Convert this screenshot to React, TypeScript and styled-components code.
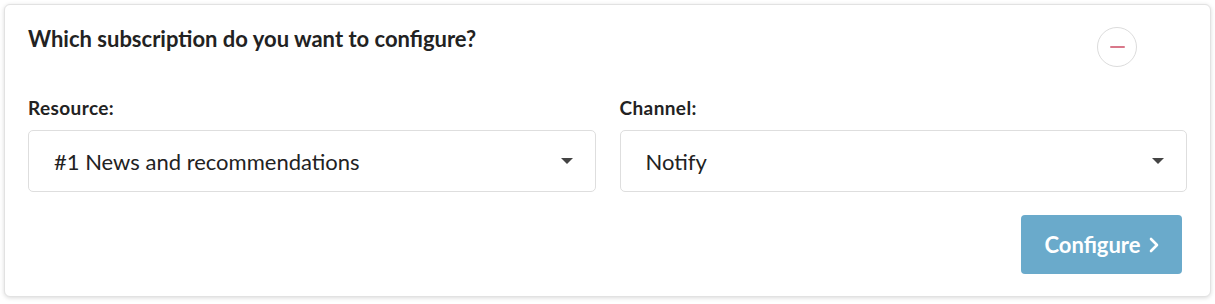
import React from 'react';
import styled, { createGlobalStyle } from 'styled-components';

const GlobalStyle = createGlobalStyle`
  body {
    margin: 0;
    background: #ffffff;
    font-family: Lato, 'Noto Sans', sans-serif;
    color: #222;
  }
`;

const Page = styled.div`
  padding: 4px 4px 6px 4px;
`;

const Card = styled.section`
  border: 1px solid #e2e2e2;
  border-radius: 6px;
  box-shadow: 0 1px 4px rgba(0, 0, 0, 0.15);
  padding: 21px 23px 22px 23px;
  background: #fff;
`;

const Header = styled.div`
  display: flex;
  justify-content: space-between;
  align-items: flex-start;
  height: 71px;
`;

const Title = styled.h2`
  margin: 0;
  font-size: 22px;
  line-height: 26px;
  font-weight: 700;
  color: #222;
`;

const RemoveButton = styled.button`
  width: 40px;
  height: 40px;
  margin: 1px 50px 0 0;
  border-radius: 50%;
  border: 1px solid #dcdcdc;
  background: #fff;
  display: flex;
  align-items: center;
  justify-content: center;
  padding: 0;
  cursor: pointer;
`;

const MinusLine = styled.span`
  width: 15px;
  height: 2px;
  border-radius: 1px;
  background: #d9788a;
`;

const Fields = styled.div`
  display: grid;
  grid-template-columns: 1fr 1fr;
  gap: 24px;
`;

const Field = styled.div`
  display: flex;
  flex-direction: column;
`;

const Label = styled.label`
  font-size: 19px;
  line-height: 22px;
  font-weight: 700;
  letter-spacing: 0.4px;
  color: #222;
  margin-bottom: 11px;
`;

const Select = styled.div`
  height: 60px;
  border: 1px solid #dedede;
  border-radius: 5px;
  display: flex;
  align-items: center;
  justify-content: space-between;
  padding: 0 22px 0 25px;
  font-size: 22px;
  color: #222;
`;

const Caret = styled.span`
  width: 0;
  height: 0;
  border-left: 6px solid transparent;
  border-right: 6px solid transparent;
  border-top: 6px solid #444;
`;

const Actions = styled.div`
  display: flex;
  justify-content: flex-end;
  margin-top: 23px;
  padding-right: 5px;
`;

const PrimaryButton = styled.button`
  height: 59px;
  width: 161px;
  border: none;
  border-radius: 4px;
  background: #6aaacb;
  color: #fff;
  font-family: Lato, 'Noto Sans', sans-serif;
  font-size: 22px;
  font-weight: 700;
  display: flex;
  align-items: center;
  justify-content: center;
  gap: 8px;
  padding: 0;
  cursor: pointer;
`;

const Chevron = () => (
  <svg width="10" height="16" viewBox="0 0 10 16">
    <path d="M2 2 L8 8 L2 14" stroke="#fff" strokeWidth="2.6" fill="none" strokeLinecap="round" strokeLinejoin="round" />
  </svg>
);

const App = () => {
  return (
    <Page>
      <GlobalStyle />
      <Card>
        <Header>
          <Title>Which subscription do you want to configure?</Title>
          <RemoveButton aria-label="remove">
            <MinusLine />
          </RemoveButton>
        </Header>
        <Fields>
          <Field>
            <Label>Resource:</Label>
            <Select>
              #1 News and recommendations
              <Caret />
            </Select>
          </Field>
          <Field>
            <Label>Channel:</Label>
            <Select>
              Notify
              <Caret />
            </Select>
          </Field>
        </Fields>
        <Actions>
          <PrimaryButton>
            Configure
            <Chevron />
          </PrimaryButton>
        </Actions>
      </Card>
    </Page>
  );
};

export default App;
